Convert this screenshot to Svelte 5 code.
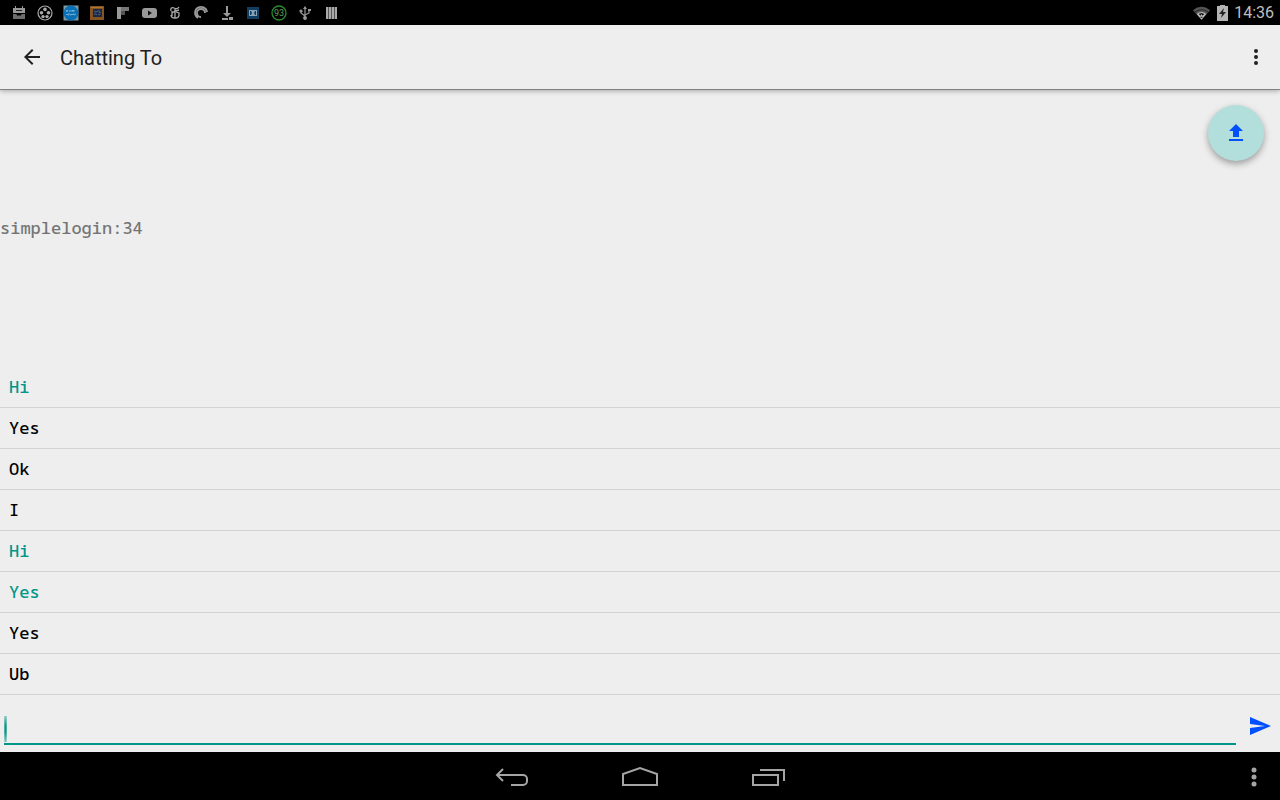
<script>
    import { tick } from "svelte";

    let messages = $state([
        { text: 'Hi', mine: true },
        { text: 'Yes', mine: false },
        { text: 'Ok', mine: false },
        { text: 'I', mine: false },
        { text: 'Hi', mine: true },
        { text: 'Yes', mine: true },
        { text: 'Yes', mine: false },
        { text: 'Ub', mine: false }
    ])
    let contact = 'simplelogin:34'
    let draft = $state('')
    let list

    // adds the draft to the list and scrolls to it
    async function send(event) {
        event.preventDefault()
        if (!draft.trim()) return
        messages.push({ text: draft, mine: true })
        draft = ''
        await tick()
        list.scrollTop = list.scrollHeight
    }
</script>

<div class="screen">
    <div class="status">
        <div class="notifications">
            <!-- inbox -->
            <svg viewBox="0 0 16 16"><path fill="#999" d="M2 3h2V1h1v2h6V1h1v2h2v5H2z"/><path fill="#222" d="M5 5h6v1H5z"/><path fill="#6c6c6c" d="M2 9h3l2 2 1-1 1 1 2-2h3v5H2z"/></svg>
            <!-- film reel -->
            <svg viewBox="0 0 16 16"><circle cx="8" cy="8" r="7" fill="none" stroke="#aaa" stroke-width="1.2"/><g fill="#aaa"><circle cx="8" cy="4.4" r="1.8"/><circle cx="4.5" cy="7.8" r="1.8"/><circle cx="11.5" cy="7.8" r="1.8"/><circle cx="6" cy="11.600" r="1.7"/><circle cx="10" cy="11.600" r="1.7"/></g></svg>
            <!-- blue badge -->
            <svg viewBox="0 0 16 16"><path fill="#8298a4" d="M.5.5h15v15H.5z"/><circle cx="8" cy="8" r="7.4" fill="#0870b5"/><path fill="none" stroke="#8fc0dc" stroke-width=".8" d="M3 5l1 2 1-2M7 5v2M9 7V5l1 1 1-1v2M3 10l1-1 1 1h1V8M7 10h1V9l1 1 1-1h1v1l2-1"/></svg>
            <!-- framed picture -->
            <svg viewBox="0 0 16 16"><path fill="#87531f" d="M1 1h14v14H1z"/><path fill="#b07730" d="M2 2h12v1H2z"/><path fill="#182848" d="M4 4h9v8H4z"/><path fill="none" stroke="#6b8296" stroke-width=".7" d="M5 6l2 1 2-1M10 5v2l2 1M5 9h2l1 1M9 9l2 1"/></svg>
            <svg viewBox="0 0 16 16"><path fill="#9a9a9a" d="M2 2h4v12H2z"/><path fill="#777" d="M6 2h8v4H6z"/><path fill="#555" d="M6 6h4v4H6z"/></svg>
            <svg viewBox="0 0 16 16"><rect x="1" y="3" width="15" height="10" rx="3" fill="#999"/><path fill="#111" d="M7 5.5v5L11 8z"/></svg>
            <!-- newspaper -->
            <svg viewBox="0 0 16 16" fill="none" stroke="#aaa" stroke-width="1.3"><path d="M4 6C3 3 5 2 7 3s4 1 5-1M8 4v9M12 5 8 6 5 8M5 6v5M4 10c0 4 8 4 8 0V8L9 7"/></svg>
            <!-- podcast -->
            <svg viewBox="0 0 16 16" fill="none" stroke="#999" stroke-width="1.8"><path d="M5 13A6 6 0 1 1 14 7M8 12A4 4 0 1 1 12 8"/></svg>
            <!-- download -->
            <svg viewBox="0 0 16 16" fill="#999"><path d="M7 1h2v7h3l-4 4-4-4h3z"/><path d="M3 13h6v2H3zM10 12h4v3h-4z"/></svg>
            <svg viewBox="0 0 16 16"><path fill="#103e62" d="M2 2h12v12H2z"/><path fill="#8aa2b3" d="M4 5h8v6H4z"/><path fill="#103e62" d="M5 6h1l1 2-1 2H5zM11 6h-1L9 8l1 2h1z"/></svg>
            <!-- battery percent -->
            <svg viewBox="0 0 16 16"><circle cx="8" cy="8" r="7" fill="none" stroke="#2c8a2c" stroke-width="1.3"/><text x="8" y="11" text-anchor="middle" font-size="9" fill="#5aa05a">93</text></svg>
            <!-- usb -->
            <svg viewBox="0 0 16 16" fill="none" stroke="#999" stroke-width="1.2"><path d="M8 3v10M4 6v2l4 3M12 5v3l-4 2"/><path fill="#999" stroke="none" d="M6 4l2-3 2 3zM11 4h3v2h-3z"/><circle cx="8" cy="13" r="1.3" fill="#999"/><circle cx="4" cy="6" r="1" fill="#999"/></svg>
            <svg viewBox="0 0 16 16"><path fill="#555" d="M3 2h11v12H3z"/><path fill="#aaa" d="M3 2h2v12H3zM6 2h2v12H6zM9 2h2v12H9zM12 2h2v12h-2z"/></svg>
        </div>
        <div class="system">
            <svg class="wifi" viewBox="0 0 20 16"><path fill="#555" d="M1 5q9-7 18 0l-9 10z"/><path fill="none" stroke="#222" d="M3 7q7-5 14 0"/><path fill="#bbb" d="M5 9q5-4 10 0l-5 6z"/><path fill="#111" d="m7 9 2 2 1-2 1 2 2-2-3-1zM9 12h2v1H9z"/></svg>
            <svg class="battery" viewBox="0 0 11 16"><path fill="#b5b5b5" d="M3 0h5v1h3v15H0V1h3z"/><path fill="#222" d="M7 3 2 9h3l-1 4 5-6H6z"/></svg>
            <span class="time">14:36</span>
        </div>
    </div>

    <header>
        <button class="icon" aria-label="Back">
            <svg viewBox="0 0 24 24" width="24" height="24"><path fill="#212121" d="M20 11H7.8l5.6-5.6L12 4l-8 8 8 8 1.4-1.4L7.8 13H20z"/></svg>
        </button>
        <h1>Chatting To</h1>
        <button class="icon" aria-label="More options">
            <svg viewBox="0 0 24 24" width="24" height="24" fill="#212121"><circle cx="12" cy="6" r="2"/><circle cx="12" cy="12" r="2"/><circle cx="12" cy="18" r="2"/></svg>
        </button>
    </header>

    <main>
        <button class="fab" aria-label="Upload">
            <svg viewBox="0 0 24 24" width="24" height="24"><path fill="#0050ff" d="M9 16h6v-6h4l-7-7-7 7h4zM5 18h14v2H5z"/></svg>
        </button>
        <div class="contact">{contact}</div>
        <ul bind:this={list}>
            {#each messages as message}
                <li class:mine={message.mine}>{message.text}</li>
            {/each}
        </ul>
        <form onsubmit={send}>
            <input type="text" aria-label="Message" autocomplete="off" bind:value={draft}>
            <button class="send" aria-label="Send">
                <svg viewBox="0 0 24 24" width="24" height="24"><path fill="#0050ff" d="M2 21 23 12 2 3v7l15 2-15 2z"/></svg>
            </button>
        </form>
    </main>

    <nav>
        <span></span>
        <div class="keys">
            <button aria-label="Back">
                <svg viewBox="0 0 36 24" width="36" height="24"><path d="M9 4 3 10l6 6M3 10h26a4 4 0 0 1 4 4v2a4 4 0 0 1-4 4H17"/></svg>
            </button>
            <button aria-label="Home">
                <svg viewBox="0 0 36 24" width="36" height="24"><path d="M1 20V9l17-6 17 6v11z"/></svg>
            </button>
            <button aria-label="Recent apps">
                <svg viewBox="0 0 36 24" width="36" height="24"><path d="M3 10h25v10H3zM10 5h24v11"/></svg>
            </button>
        </div>
        <button class="menu" aria-label="Menu">
            <svg viewBox="0 0 24 24" width="24" height="24"><circle cx="12" cy="5" r="2.5"/><circle cx="12" cy="12" r="2.5"/><circle cx="12" cy="19" r="2.5"/></svg>
        </button>
    </nav>
</div>

<style>
    :global(body) {
        margin: 0;
        background-color: #eee;
    }

    .screen {
        display: flex;
        flex-direction: column;
        height: 100vh;
        font-family: Roboto, sans-serif;
        background-color: #eee;
    }

    button {
        display: flex;
        align-items: center;
        justify-content: center;
        padding: 0;
        border: none;
        background: none;
        cursor: pointer;
    }

    svg {
        display: block;
    }

    .status {
        display: flex;
        justify-content: space-between;
        align-items: center;
        height: 25px;
        padding: 0 6px 0 11px;
        background-color: #000;
    }

    .notifications {
        display: flex;
        gap: 10px;
    }

    .notifications svg {
        width: 16px;
        height: 16px;
    }

    .system {
        display: flex;
        align-items: center;
        gap: 6px;
    }

    .wifi {
        width: 19px;
        height: 16px;
    }

    .battery {
        width: 11px;
        height: 16px;
    }

    .time {
        font-size: 16px;
        line-height: 25px;
        color: #bebebe;
    }

    header {
        position: relative;
        display: flex;
        align-items: center;
        height: 64px;
        padding: 0 12px 0 20px;
        border-bottom: 1px solid #808080;
        box-shadow: 0 1px 5px rgba(0, 0, 0, 0.3);
    }

    h1 {
        flex: 1;
        margin: 0;
        padding: 2px 0 0 16px;
        font-size: 20px;
        line-height: 24px;
        font-weight: 400;
        color: #212121;
    }

    main {
        position: relative;
        display: flex;
        flex: 1;
        flex-direction: column;
        min-height: 0;
        font-family: "Droid Sans Mono", "Noto Sans Mono", "DejaVu Sans Mono", monospace;
        font-size: 17px;
        font-weight: 500;
        line-height: 24px;
    }

    .fab {
        position: absolute;
        top: 15px;
        right: 16px;
        width: 56px;
        height: 56px;
        border-radius: 50%;
        background-color: #b2dfdb;
        box-shadow: 0 3px 7px rgba(0, 0, 0, 0.35);
    }

    .contact {
        display: flex;
        flex: 1;
        align-items: center;
        padding-bottom: 2px;
        color: #757575;
    }

    ul {
        margin: 0;
        padding: 0;
        list-style: none;
        overflow-y: auto;
    }

    li {
        padding: 8px 9px;
        border-bottom: 1px solid #d3d3d3;
        color: #000;
    }

    .mine {
        color: #009688;
    }

    form {
        display: flex;
        padding: 16px 8px 7px 4px;
    }

    input {
        flex: 1;
        height: 34px;
        min-width: 0;
        box-sizing: border-box;
        padding: 0 4px;
        border: none;
        border-bottom: 2px solid #009688;
        outline: none;
        background: radial-gradient(ellipse, #009688 20%, #9fd0cb 80%) 0 5px / 3px 26px no-repeat;
        font: inherit;
        color: #000;
    }

    .send {
        width: 24px;
        height: 30px;
        margin-left: 12px;
    }

    nav {
        display: grid;
        grid-template-columns: 1fr auto 1fr;
        align-items: center;
        height: 46px;
        padding-top: 2px;
        background-color: #000;
    }

    .keys {
        display: flex;
        gap: 92px;
    }

    .keys svg {
        fill: none;
        stroke: #a5a5a5;
        stroke-width: 2;
    }

    .menu {
        justify-self: end;
        margin-right: 14px;
    }

    .menu svg {
        fill: #a5a5a5;
    }
</style>
